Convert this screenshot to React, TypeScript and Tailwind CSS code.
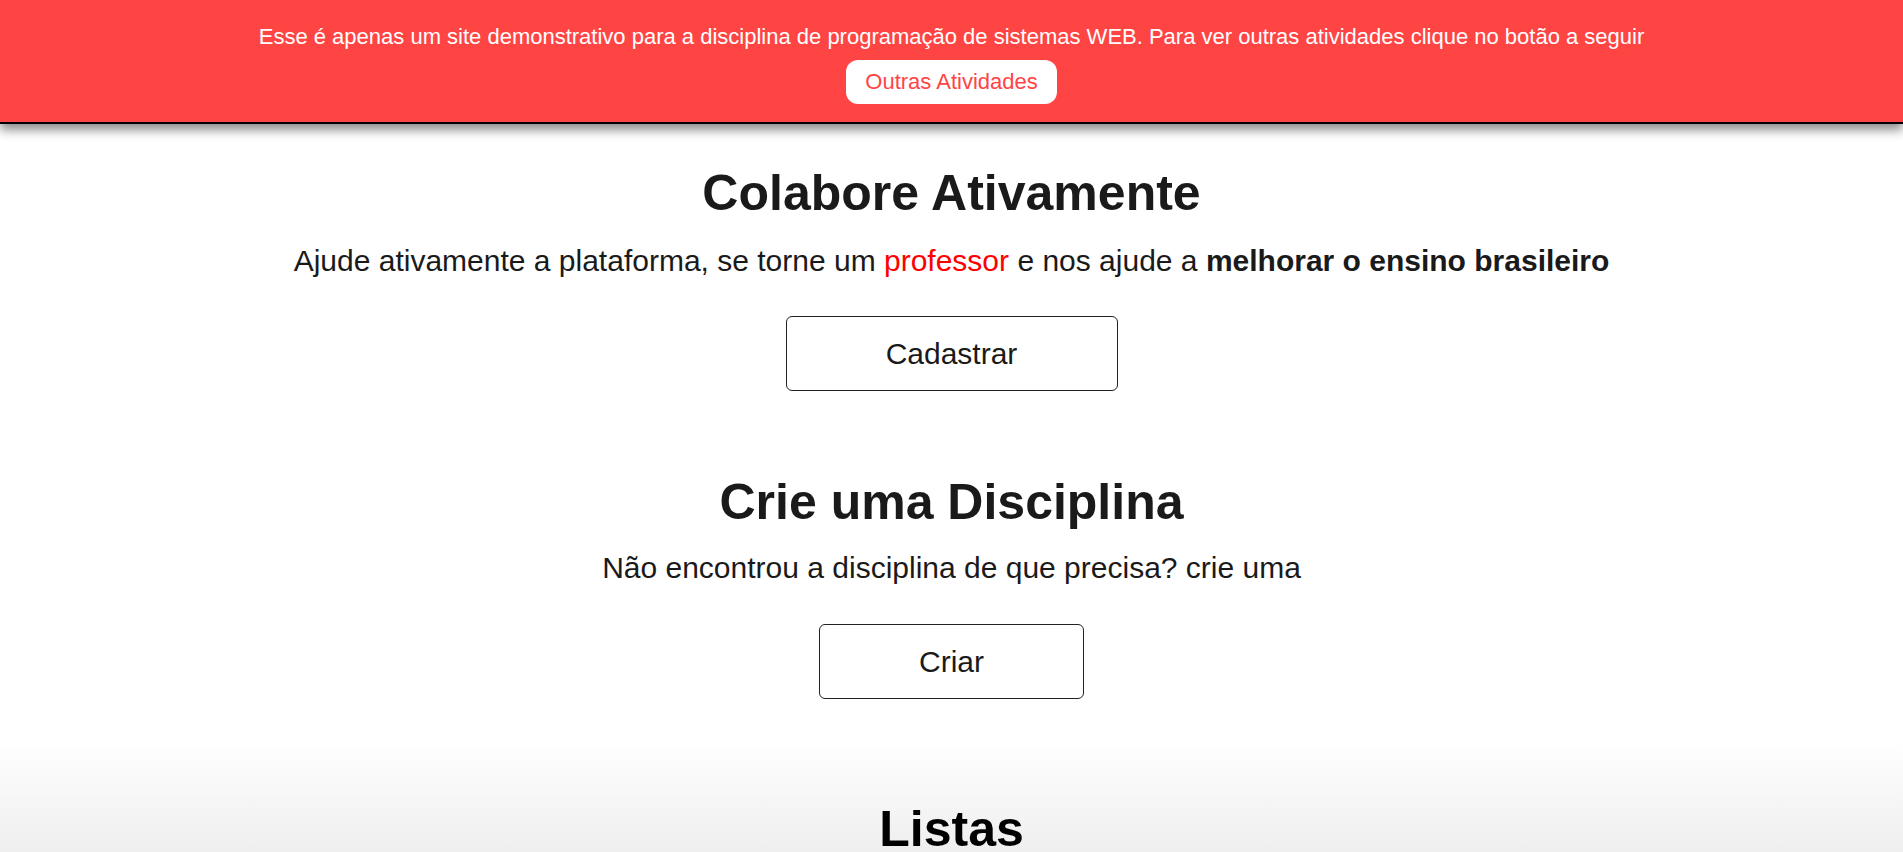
export default function App() {
  return (
    <div className="min-h-screen bg-white text-[#1a1a1a] font-['Liberation_Sans',Arial,sans-serif]">
      {/* aviso do topo */}
      <div className="bg-[#ff4444] border-b-2 border-black shadow-[0_6px_10px_rgba(0,0,0,0.45)] h-[124px] flex flex-col items-center pt-[25px] relative z-10">
        <p className="text-white text-[22px] leading-[24px]">
          Esse é apenas um site demonstrativo para a disciplina de programação de sistemas WEB. Para ver outras atividades clique no botão a seguir
        </p>
        <button className="mt-[11px] bg-white text-[#ff4444] text-[22px] leading-[24px] rounded-[12px] px-[19px] py-[10px]">
          Outras Atividades
        </button>
      </div>

      <section className="flex flex-col items-center pt-[40px]">
        <h1 className="text-[50px] font-bold leading-[58px]">Colabore Ativamente</h1>
        <p className="text-[30px] leading-[34px] mt-[22px]">
          Ajude ativamente a plataforma, se torne um <span className="text-[#ff0000]">professor</span> e nos ajude a{" "}
          <b>melhorar o ensino brasileiro</b>
        </p>
        <button className="mt-[38px] w-[332px] h-[75px] border border-[#222] rounded-[6px] text-[30px]">
          Cadastrar
        </button>
      </section>

      <section className="flex flex-col items-center pt-[82px]">
        <h1 className="text-[50px] font-bold leading-[58px]">Crie uma Disciplina</h1>
        <p className="text-[30px] leading-[34px] mt-[20px]">Não encontrou a disciplina de que precisa? crie uma</p>
        <button className="mt-[39px] w-[265px] h-[75px] border border-[#222] rounded-[6px] text-[30px]">
          Criar
        </button>
      </section>

      <section className="mt-[41px] pt-[60px] bg-gradient-to-b from-white to-[#cccccc] flex flex-col items-center h-[350px]">
        <h1 className="text-[50px] font-bold leading-[58px] text-black">Listas</h1>
      </section>
    </div>
  );
}
